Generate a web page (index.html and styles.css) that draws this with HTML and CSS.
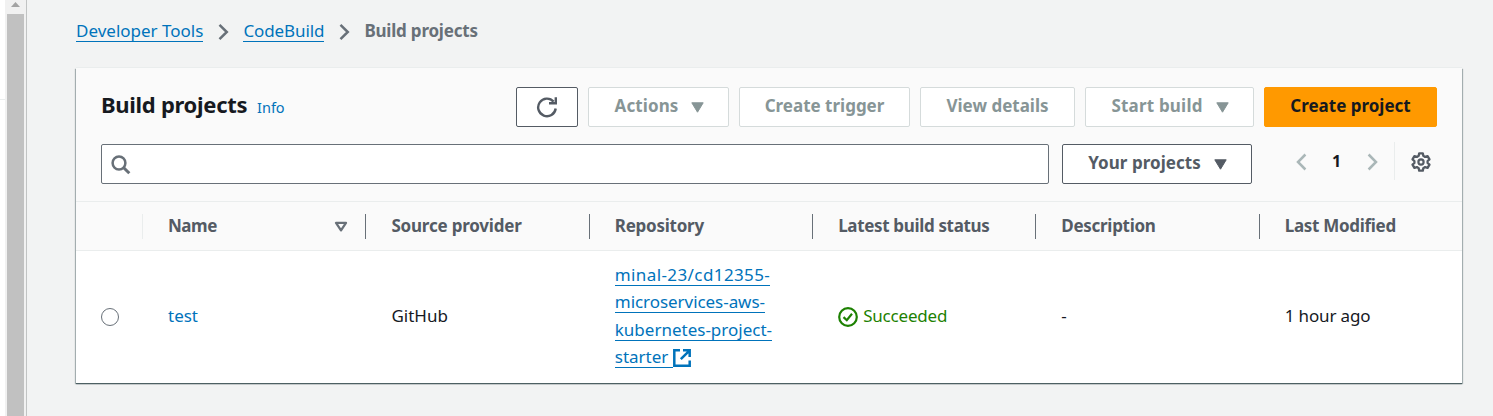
FILE: index.html
```
<!DOCTYPE html>
<html lang="en">
<head>
<meta charset="utf-8">
<title>Build projects</title>
<link rel="stylesheet" href="styles.css">
</head>
<body>
<div class="app">
  <aside class="side"><div class="side-rule"></div></aside>
  <div class="scrollbar">
    <svg class="scroll-up" width="9" height="5" viewBox="0 0 9 5"><path d="M0 5L4.5 0L9 5Z" fill="#a3a3a3"/></svg>
    <div class="thumb"></div>
  </div>
  <main class="main">
    <nav class="crumbs">
      <a class="link t-dev">Developer Tools</a>
      <svg class="sep" width="11" height="18" viewBox="0 0 11 18"><path d="M1.5 1.8L8.8 9L1.5 16.2" fill="none" stroke="#687078" stroke-width="2.5"/></svg>
      <a class="link t-cb">CodeBuild</a>
      <svg class="sep" width="11" height="18" viewBox="0 0 11 18"><path d="M1.5 1.8L8.8 9L1.5 16.2" fill="none" stroke="#687078" stroke-width="2.5"/></svg>
      <span class="current t-bp">Build projects</span>
    </nav>
    <section class="card">
      <header class="head">
        <div class="row actions">
          <h1 class="title">Build projects</h1>
          <a class="info">Info</a>
          <div class="buttons">
            <button class="btn refresh" aria-label="Refresh"><svg width="22" height="22" viewBox="0 0 22 22"><path d="M19.7 12.5A8.8 8.8 0 1 1 17.6 5.6" fill="none" stroke="#545b64" stroke-width="2.4"/><path d="M19.8 1.2V7.2H13" fill="none" stroke="#545b64" stroke-width="2.4"/></svg></button>
            <button class="btn off actions-btn"><span class="t-act">Actions</span><svg width="13" height="11" viewBox="0 0 13 11"><path d="M.8.8H12.2L6.5 10.2Z" fill="currentColor" stroke="currentColor" stroke-linejoin="round"/></svg></button>
            <button class="btn off trigger"><span class="t-trig">Create trigger</span></button>
            <button class="btn off details"><span class="t-view">View details</span></button>
            <button class="btn off start"><span class="t-start">Start build</span><svg width="13" height="11" viewBox="0 0 13 11"><path d="M.8.8H12.2L6.5 10.2Z" fill="currentColor" stroke="currentColor" stroke-linejoin="round"/></svg></button>
            <button class="btn primary"><span class="t-create">Create project</span></button>
          </div>
        </div>
        <div class="row filters">
          <div class="search"><svg width="20" height="20" viewBox="0 0 20 20"><circle cx="8" cy="8" r="6.4" fill="none" stroke="#687078" stroke-width="2.5"/><path d="M12.5 12.5L18.3 18.3" stroke="#687078" stroke-width="3"/></svg></div>
          <button class="btn yours"><span class="t-your">Your projects</span><svg width="13" height="11" viewBox="0 0 13 11"><path d="M.8.8H12.2L6.5 10.2Z" fill="currentColor" stroke="currentColor" stroke-linejoin="round"/></svg></button>
          <div class="pager">
            <svg width="11" height="18" viewBox="0 0 11 18"><path d="M9.4 1.5L2 9L9.4 16.5" fill="none" stroke="#aab7b8" stroke-width="2.5"/></svg>
            <span class="page">1</span>
            <svg width="11" height="18" viewBox="0 0 11 18"><path d="M1.6 1.5L9 9L1.6 16.5" fill="none" stroke="#aab7b8" stroke-width="2.5"/></svg>
          </div>
          <div class="settings"><svg width="20" height="20" viewBox="0 0 20 20"><path d="M8.2 1.3H11.8L12.3 3.8L14.1 4.9L16.6 4.1L18.5 7.3L16.6 9V11L18.5 12.7L16.6 15.9L14.1 15.1L12.3 16.2L11.8 18.7H8.2L7.7 16.2L5.9 15.1L3.4 15.9L1.5 12.7L3.4 11V9L1.5 7.3L3.4 4.1L5.9 4.9L7.7 3.8Z" fill="none" stroke="#545b64" stroke-width="2.3" stroke-linejoin="round"/><circle cx="10" cy="10" r="2.6" fill="none" stroke="#545b64" stroke-width="2.2"/></svg></div>
        </div>
      </header>
      <div class="grid thead">
        <div class="th light"></div>
        <div class="th"><span class="t-name">Name</span><svg class="sort" width="14" height="12" viewBox="0 0 14 12"><path d="M2 1.9H12L7 9.4Z" fill="none" stroke="#687078" stroke-width="2.3" stroke-linejoin="round"/></svg></div>
        <div class="th"><span class="t-src">Source provider</span></div>
        <div class="th"><span class="t-repo">Repository</span></div>
        <div class="th"><span class="t-lbs">Latest build status</span></div>
        <div class="th"><span class="t-desc">Description</span></div>
        <div class="th last"><span class="t-lm">Last Modified</span></div>
      </div>
      <div class="grid tbody">
        <div class="td pick"><span class="radio"></span></div>
        <div class="td"><a class="plain t-test">test</a></div>
        <div class="td"><span class="t-gh">GitHub</span></div>
        <div class="td repo">
          <div><a class="link t-r1">minal-23/cd12355-</a></div>
          <div><a class="link t-r2">microservices-aws-</a></div>
          <div><a class="link t-r3">kubernetes-project-</a></div>
          <div class="ext"><a class="link t-r4">starter&nbsp;</a><svg width="18" height="18" viewBox="0 0 18 18"><path d="M7 1.3H1.3V16.7H16.7V11.5M10 1.3H16.7V8M16.2 1.8L7.8 10.2" fill="none" stroke="#0073bb" stroke-width="2.5"/></svg></div>
        </div>
        <div class="td status"><svg width="20" height="20" viewBox="0 0 20 20"><circle cx="10" cy="10" r="8.8" fill="none" stroke="#1d8102" stroke-width="2.2"/><path d="M5.5 10.1L8.8 13.2L14 6.8" fill="none" stroke="#1d8102" stroke-width="2.2"/></svg><span class="t-succ">Succeeded</span></div>
        <div class="td">-</div>
        <div class="td"><span class="t-ago">1 hour ago</span></div>
      </div>
    </section>
  </main>
</div>
</body>
</html>
```
FILE: styles.css
```
* { box-sizing: border-box; }
body { margin: 0; font-family: "Noto Sans", sans-serif; font-size: 17px; color: #16191f; background: #f2f3f3; overflow: hidden; }
svg { display: block; flex: none; }
span, a { white-space: nowrap; }
.app { display: flex; height: 416px; }
.side { width: 5px; background: #fff; padding-top: 99px; }
.side-rule { height: 1px; background: #eaeded; }
.scrollbar { width: 22px; background: #f1f1f1; border-right: 1px solid #c1c3c3; display: flex; flex-direction: column; align-items: center; padding: 2px 1px 0 1px; }
.thumb { width: 17px; margin-top: 7px; flex: 1; background: #c1c1c1; }
.main { flex: 1; padding: 19px 31px 0 49px; }
.crumbs { display: flex; align-items: center; height: 24px; }
.sep { margin: 2px 14px 0 15px; }
.link { color: #0073bb; border-bottom: 1px solid #0073bb; display: inline-block; height: 23px; line-height: 23px; }
.crumbs .link { height: 22px; margin-bottom: 1px; line-height: 21px; }
.current { color: #687078; font-weight: 700; line-height: 24px; }
.card { margin-top: 25px; width: 1386px; height: 315px; background: #fff; box-shadow: 0 1px 1px 0 #4d6063, 1px 1px 1px 0 rgba(0,28,36,.25), -1px 1px 1px 0 rgba(0,28,36,.25), 0 -1px 0 0 #eaeded; }
.head { height: 134px; background: #fafafa; border-bottom: 1px solid #eaeded; padding: 19px 25px 0; }
.row { display: flex; }
.actions { align-items: flex-start; height: 57px; }
.title { margin: 0; font-size: 22px; letter-spacing: -.3px; line-height: 35px; font-weight: 700; width: 156px; white-space: nowrap; }
.info { color: #0073bb; font-size: 14.5px; line-height: 41px; }
.buttons { display: flex; gap: 10px; margin-left: auto; }
.btn { height: 40px; padding: 0 0 4px; background: #fff; border: 1px solid #545b64; border-radius: 2px; font: 700 17px "Noto Sans", sans-serif; color: #545b64; display: flex; align-items: center; justify-content: center; gap: 13px; }
.btn svg { margin-top: 4px; }
.off { border-color: #d5dbdb; color: #879596; }
.refresh { width: 62px; }
.actions-btn { width: 141px; padding-left: 2px; }
.trigger { width: 171px; }
.details { width: 155px; }
.start { width: 169px; padding-left: 1px; }
.primary { width: 173px; background: #ff9900; border-color: #ff9900; color: #16191f; }
.filters { height: 40px; }
.search { width: 948px; height: 40px; background: #fff; border: 1px solid #687078; border-radius: 2px; padding: 10px 9px; }
.yours { width: 190px; margin-left: 13px; padding-left: 1px; }
.pager { display: flex; margin-left: 44px; height: 36px; align-items: center; gap: 26px; width: 98px; }
.page { font-weight: 700; font-size: 16px; line-height: 30px; width: 8px; margin: -2px 1px 0 -1px; }
.settings { height: 38px; margin-top: -2px; border-left: 1px solid #eaeded; padding: 10px 0 0 16px; }
.grid { display: grid; grid-template-columns: 67px 223.4px 223.4px 223.4px 223.2px 223.4px 202px; }
.thead { height: 49px; background: #fafafa; border-bottom: 1px solid #eaeded; align-items: center; font-weight: 700; color: #545b64; }
.th { height: 25px; border-right: 1px solid #687078; padding-left: 25px; display: flex; align-items: center; line-height: 24px; }
.th.light { border-color: #eaeded; }
.th.last { border: 0; }
.sort { margin: 1px 17px 0 auto; }
.tbody { height: 132px; align-items: center; }
.td { padding-left: 25px; line-height: 26px; padding-bottom: 2px; }
.td.pick { padding-bottom: 0; }
.radio { display: block; width: 18px; height: 18px; border: 1px solid #687078; border-radius: 50%; }
.plain { color: #0073bb; }
.repo { display: grid; grid-template-rows: 27px 28px 27px 27px; padding: 1px 0 0 25px; align-items: start; line-height: 22px; }
.repo > div { display: flex; }
.ext svg { margin-top: 4px; }
.status { display: flex; align-items: center; gap: 5px; color: #1d8102; }
.status svg { margin-top: 2px; }
.t-cb { letter-spacing: -.1px; }
.t-bp { letter-spacing: -.2px; }
.t-act { letter-spacing: .1px; }
.t-start { letter-spacing: .2px; }
.t-your { letter-spacing: .05px; }
.t-name { letter-spacing: -.45px; }
.t-src { letter-spacing: -.2px; }
.t-repo { letter-spacing: -.25px; }
.t-lbs { letter-spacing: -.34px; }
.t-desc { letter-spacing: -.3px; }
.t-lm { letter-spacing: -.3px; }
.t-r1 { letter-spacing: .4px; }
.t-r2 { letter-spacing: -.05px; }
.t-succ { letter-spacing: -.2px; }
.t-ago { letter-spacing: -.15px; }
```
